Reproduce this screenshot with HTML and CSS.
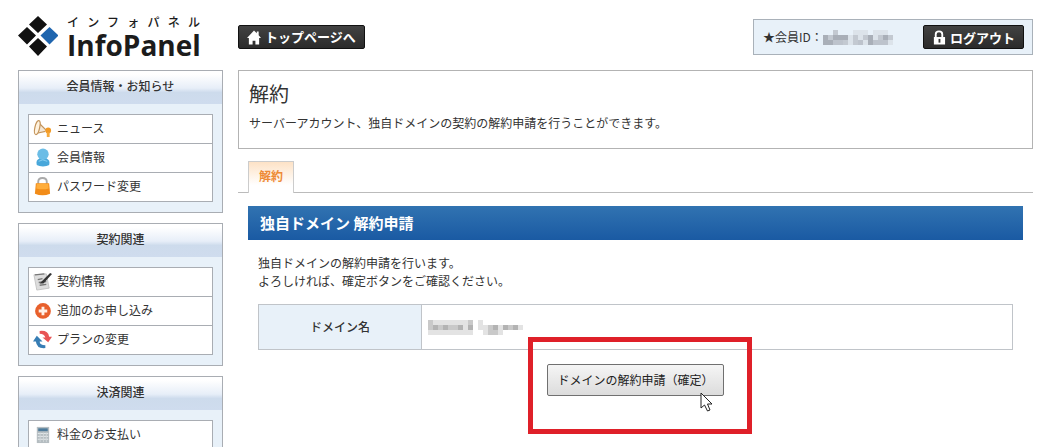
FILE: index.html
```html
<!DOCTYPE html>
<html lang="ja">
<head>
<meta charset="utf-8">
<title>解約 | InfoPanel</title>
<link rel="stylesheet" href="styles.css">
</head>
<body>
<div class="page">
  <aside class="sidebar">
    <a class="logo" href="#">
      <svg class="logo-mark" viewBox="0 0 40 40" aria-hidden="true">
        <path fill="#111" d="M20 0l9 8.500-9 8.500-9-8.500zM9 11l9 8.500-9 9-9-9zM20 22l9 8.500-9 9.500-9-9.500z"/>
        <path fill="#1f65ae" d="M31.500 11l9 8.500-9 9-9-9z"/>
      </svg>
      <span class="logo-text"><span class="logo-kana">インフォパネル</span><span class="logo-name">InfoPanel</span></span>
    </a>
    <section class="panel">
      <h2 class="panel-title">会員情報・お知らせ</h2>
      <ul class="menu">
        <li><a href="#"><svg class="icon" viewBox="0 0 20 20" aria-hidden="true"><path d="M5 3L15 12 3 15z" fill="#f3e7d6"/><path d="M6 4l8 8M4 15l9-2" stroke="#c4955c" stroke-width="1.300"/><ellipse cx="4.500" cy="9" rx="2.500" ry="7.500" transform="rotate(13 4.500 9)" fill="#fff3df" stroke="#c4955c" stroke-width="1.300"/><circle cx="16" cy="12" r="3" fill="#f39a24"/><path d="M14.500 14h3v5h-3z" fill="#f5a93c"/></svg>ニュース</a></li>
        <li><a href="#"><svg class="icon" viewBox="0 0 20 20" aria-hidden="true"><path d="M4 18c-1-4 0-6 3-7h7c3 1 4 3 3 7-3 2-10 2-13 0z" fill="#48a7da"/><circle cx="10.500" cy="6.500" r="6" fill="#6bbde6"/><path d="M6 14q4-3 9 0" stroke="#8bd0f0" fill="none"/></svg>会員情報</a></li>
        <li><a href="#"><svg class="icon" viewBox="0 0 20 20" aria-hidden="true"><path d="M5.500 8V5q0-4 4.500-4t4.500 4v3" fill="none" stroke="#aaa" stroke-width="2"/><path d="M3 6.500h14l1 11q-8 3.500-16 0z" fill="#f28c18"/><path d="M4 7h12l.5 5q-6 2-13 0z" fill="#ffad3b"/></svg>パスワード変更</a></li>
      </ul>
    </section>
    <section class="panel">
      <h2 class="panel-title">契約関連</h2>
      <ul class="menu">
        <li><a href="#"><svg class="icon" viewBox="0 0 20 20" aria-hidden="true"><path d="M1 3l13-1 3 15-13 2z" fill="#ddd" stroke="#c4c4c4"/><path d="M2 3l10-1M5 8l5-1M6 11l8-1M7 14l7-1" stroke="#777" stroke-width="1.500"/><path d="M7 12L18 1l2 1-9 10z" fill="#333"/></svg>契約情報</a></li>
        <li><a href="#"><svg class="icon" viewBox="0 0 20 20" aria-hidden="true"><circle cx="10.500" cy="10.500" r="8.300" fill="#e8602c"/><path d="M9 6h3v3h3v3h-3v3H9v-3H6V9h3z" fill="#fff0e6"/></svg>追加のお申し込み</a></li>
        <li><a href="#"><svg class="icon" viewBox="0 0 20 20" aria-hidden="true"><path d="M7 1q9-1 10 6h3l-4 6-6-5h3q-1-4-6-4z" fill="#e85454"/><path d="M13 19q-9 1-10-7H0l4-6 6 6H7q0 4 6 4z" fill="#377db4"/></svg>プランの変更</a></li>
      </ul>
    </section>
    <section class="panel">
      <h2 class="panel-title">決済関連</h2>
      <ul class="menu">
        <li><a href="#"><svg class="icon" viewBox="0 0 20 20" aria-hidden="true"><path d="M4 2h13v17H4z" fill="#b5bdc1"/><path d="M5.500 3.500h10v3h-10z" fill="#4e7b9b"/><path d="M5 9h11M5 12h11M5 15h11" stroke="#e6eaec"/><path d="M7.500 8v10M11 8v10M14 8v10" stroke="#d0d6d9"/></svg>料金のお支払い</a></li>
      </ul>
    </section>
  </aside>

  <main class="main">
    <header class="topbar">
      <a class="dark-button" href="#"><svg class="dark-icon" viewBox="0 0 15 15" aria-hidden="true"><path fill="#fff" d="M7.500 0l3 3V1h2v4L15 8h-2v7H9v-4H6v4H2V8H0z"/></svg>トップページへ</a>
      <div class="member">
        <span>★会員ID：</span>
        <svg class="mosaic mosaic-id" viewBox="0 0 70 15" aria-label="会員ID" shape-rendering="crispEdges">
          <path fill="#dce3ea" d="M0 5h70v10H0zM10 0h5v5h-5zM30 0h15v5H30zM50 0h15v5H50z"/>
          <path fill="#c3c9d1" d="M10 0h5v5h-5zM5 5h5v5H5zM30 5h5v10h-5zM40 5h5v5h-5zM55 5h5v5h-5zM65 5h5v5h-5zM20 10h5v5h-5z"/>
          <path fill="#a9afb8" d="M0 5h5v10H0zM10 5h10v5H10zM20 5h5v5h-5zM5 10h5v5H5zM45 5h5v10h-5zM60 5h5v5h-5z"/>
          <path fill="#bdc3cc" d="M10 10h10v5H10zM50 10h15v5H50zM35 10h5v5h-5z"/>
        </svg>
        <button class="dark-button logout" type="button"><svg class="dark-icon" viewBox="0 0 15 15" aria-hidden="true"><path fill="none" stroke="#fff" stroke-width="2" d="M4 8V4q0-3 3.500-3T11 4v3"/><path fill="#fff" d="M2 7h12v8H2z"/><path fill="#333" d="M7 9h2v4H7z"/></svg>ログアウト</button>
      </div>
    </header>

    <section class="intro">
      <h1>解約</h1>
      <p>サーバーアカウント、独自ドメインの契約の解約申請を行うことができます。</p>
    </section>

    <nav class="tabs"><a class="tab" href="#">解約</a></nav>

    <section class="content">
      <h2 class="bar">独自ドメイン 解約申請</h2>
      <div class="body">
        <p>独自ドメインの解約申請を行います。<br>よろしければ、確定ボタンをご確認ください。</p>
        <table class="domain">
          <tr><th scope="row">ドメイン名</th><td>
            <svg class="mosaic mosaic-domain" viewBox="0 0 95 15" aria-label="ドメイン名" shape-rendering="crispEdges">
              <path fill="#e3e3e3" d="M0 0h45v15H0zM50 0h5v10h-5zM55 5h20v10H55zM75 5h20v5H75z"/>
              <path fill="#c9c9c9" d="M0 0h5v10H0zM5 5h20v5H5zM25 5h10v5H25zM40 0h5v10h-5zM60 5h10v10H60zM75 5h15v5H75z"/>
              <path fill="#b3b3b3" d="M5 5h5v5H5zM15 5h5v5h-5zM30 5h5v5h-5zM40 5h5v5h-5zM65 5h5v5h-5zM75 5h5v5h-5zM85 5h5v5h-5z"/>
            </svg>
          </td></tr>
        </table>
        <div class="actions">
          <div class="confirm">
            <button class="submit" type="button">ドメインの解約申請（確定）</button>
            <span class="highlight"></span>
            <svg class="cursor" viewBox="0 0 13 20" aria-hidden="true"><path fill="#fff" stroke="#222" d="M1 1v15l3.500-3 3 6 2.500-1-2.500-6H12z"/></svg>
          </div>
        </div>
      </div>
    </section>
  </main>
</div>
</body>
</html>
```
FILE: styles.css
```css
* { box-sizing: border-box; }
html { overflow: hidden; }
body {
  margin: 0;
  background: #fff;
  color: #333;
  font: 12px/18px "Noto Sans CJK JP", sans-serif;
}
h1, h2, p, ul { margin: 0; padding: 0; }
a { color: inherit; text-decoration: none; }
button { font-family: inherit; }
.page { display: flex; gap: 15px; padding: 0 22px 0 18px; }
.sidebar { display: flex; flex: 0 0 205px; flex-direction: column; gap: 10px; }
.logo { display: flex; flex: none; gap: 9px; height: 60px; padding-top: 16px; color: #1c1c1c; }
.logo-mark { width: 40px; height: 40px; }
.logo-text { display: flex; width: 133px; flex-direction: column; }
.logo-kana { font-size: 12px; font-weight: 500; line-height: 12px; text-align: justify; text-align-last: justify; }
.logo-name { font: 700 28px/34px "Open Sans", sans-serif; }
.panel { flex: none; padding-bottom: 10px; border: 1px solid #a9adb3; background: #e8f1f9; }
.panel-title {
  height: 33px;
  margin-bottom: 10px;
  background: linear-gradient(#fff 10%, #e7eef8 52%, #cddbec 65%, #cfdcee);
  font-size: 12px;
  font-weight: 500;
  line-height: 30px;
  text-align: center;
}
.menu { margin: 0 9px; border: 1px solid #a9adb3; background: #fff; list-style: none; }
.menu li + li { border-top: 1px solid #a9adb3; }
.menu a { display: flex; align-items: center; gap: 5px; height: 28px; padding: 0 4px 2px; }
.icon { width: 19px; height: 19px; }
.main { flex: 1; min-width: 0; }
.topbar { display: flex; align-items: center; justify-content: space-between; padding-top: 19px; }
.dark-button {
  display: flex;
  align-items: center;
  gap: 4px;
  height: 24px;
  padding: 0 8px;
  border: 1px solid #111;
  border-radius: 2px;
  background: linear-gradient(#424242, #2b2b2b);
  color: #fff;
  font-size: 13px;
  font-weight: 700;
}
.dark-icon { width: 14px; height: 15px; }
.member {
  display: flex;
  align-items: center;
  width: 280px;
  height: 36px;
  padding: 0 8px 0 9px;
  border: 1px solid #a9b1b9;
  background: #e8f1f9;
}
.logout { margin-left: auto; }
.mosaic { display: block; height: 15px; }
.mosaic-id { width: 70px; }
.mosaic-domain { width: 95px; }
.intro { height: 79px; margin-top: 15px; padding: 9px 10px; border: 1px solid #b3b3b3; }
.intro h1 { font-size: 20px; font-weight: 400; line-height: 28px; }
.intro p { margin-top: 6px; }
.tabs { display: flex; padding: 12px 10px 0; border-bottom: 1px solid #bbb; }
.tab {
  margin-bottom: -1px;
  padding: 5px 10px 8px;
  border: 1px solid #ccc;
  border-bottom: 0;
  background: linear-gradient(#fde2c6, #fff 75%);
  color: #ee8a35;
  font-weight: 700;
}
.content { padding: 13px 10px 0; }
.bar {
  padding: 0 12px;
  background: linear-gradient(#3173b1, #1a5aa3);
  color: #fff;
  font-size: 15px;
  line-height: 34px;
}
.body { padding: 14px 10px 0; }
.domain { width: 100%; margin-top: 14px; border-collapse: collapse; }
.domain th, .domain td { height: 45px; padding: 0 6px; border: 1px solid #c0c4c9; }
.domain th { width: 163px; background: #e8f1f9; font-weight: 500; }
.actions { display: flex; justify-content: center; padding-top: 14px; }
.confirm { position: relative; }
.submit {
  height: 32px;
  padding: 0 9px 2px;
  border: 1px solid #707070;
  border-radius: 2px;
  background: linear-gradient(#f5f5f5, #dcdcdc);
  color: #222;
  font-size: 12px;
}
.highlight { position: absolute; inset: -27px -28px -38px -19px; border: 5px solid #df2029; pointer-events: none; }
.cursor { position: absolute; right: 11px; top: 28px; width: 13px; height: 20px; }
```
